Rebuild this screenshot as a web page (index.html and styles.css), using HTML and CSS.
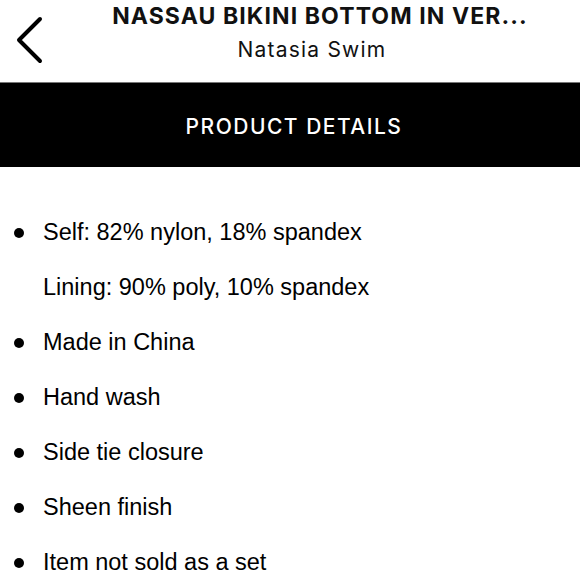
FILE: index.html
```html
<!DOCTYPE html>
<html>
<head>
<meta charset="utf-8">
<link rel="stylesheet" href="styles.css">
</head>
<body>
<header class="top">
  <div class="back">
    <svg width="30" height="48" viewBox="0 0 30 48"><polyline points="25,3 4,24 25,45" fill="none" stroke="#000" stroke-width="4" stroke-linecap="round" stroke-linejoin="round"/></svg>
  </div>
  <div class="titles">
    <div class="title">NASSAU BIKINI BOTTOM IN VER...</div>
    <div class="brand">Natasia Swim</div>
  </div>
</header>
<div class="bar">PRODUCT DETAILS</div>
<ul class="details">
  <li class="item">Self: 82% nylon, 18% spandex</li>
  <li class="item plain">Lining: 90% poly, 10% spandex</li>
  <li class="item">Made in China</li>
  <li class="item">Hand wash</li>
  <li class="item">Side tie closure</li>
  <li class="item">Sheen finish</li>
  <li class="item">Item not sold as a set</li>
</ul>
</body>
</html>
```
FILE: styles.css
```css
html, body {
  margin: 0;
  padding: 0;
  background: #fff;
  width: 580px;
  height: 580px;
  overflow: hidden;
}
.top {
  display: flex;
  height: 82px;
  align-items: flex-start;
}
.back {
  width: 52px;
  padding: 16px 0 0 15px;
  box-sizing: border-box;
  flex: none;
}
.back svg { display: block; }
.titles {
  flex: 1;
  display: flex;
  flex-direction: column;
  align-items: center;
  font-family: Inter, "Noto Sans", sans-serif;
  color: #111;
}
.title {
  font-size: 23px;
  font-weight: 700;
  line-height: 24px;
  margin-top: 4px;
  letter-spacing: 1.1px;
  padding-left: 8px;
}
.brand {
  font-size: 21px;
  font-weight: 400;
  line-height: 24px;
  margin-top: 10px;
  letter-spacing: 1.2px;
  padding-right: 8px;
}
.bar {
  background: #000;
  border-top: 1px solid #777;
  height: 85px;
  display: flex;
  align-items: center;
  justify-content: center;
  color: #fff;
  font-family: Inter, "Noto Sans", sans-serif;
  font-weight: 500;
  font-size: 21px;
  letter-spacing: 1.5px;
  padding-left: 8px;
  padding-top: 2px;
  box-sizing: border-box;
}
.details {
  list-style: none;
  margin: 0;
  padding: 38px 0 0 0;
  font-family: "Liberation Sans", Arial, sans-serif;
  font-size: 23.5px;
  color: #000;
}
.item {
  display: flex;
  align-items: center;
  height: 55px;
  padding-left: 43px;
  position: relative;
}
.item::before {
  content: "";
  position: absolute;
  left: 14px;
  top: 50%;
  width: 10px;
  height: 10px;
  margin-top: -5px;
  border-radius: 50%;
  background: #000;
}
.item.plain::before { display: none; }
```
